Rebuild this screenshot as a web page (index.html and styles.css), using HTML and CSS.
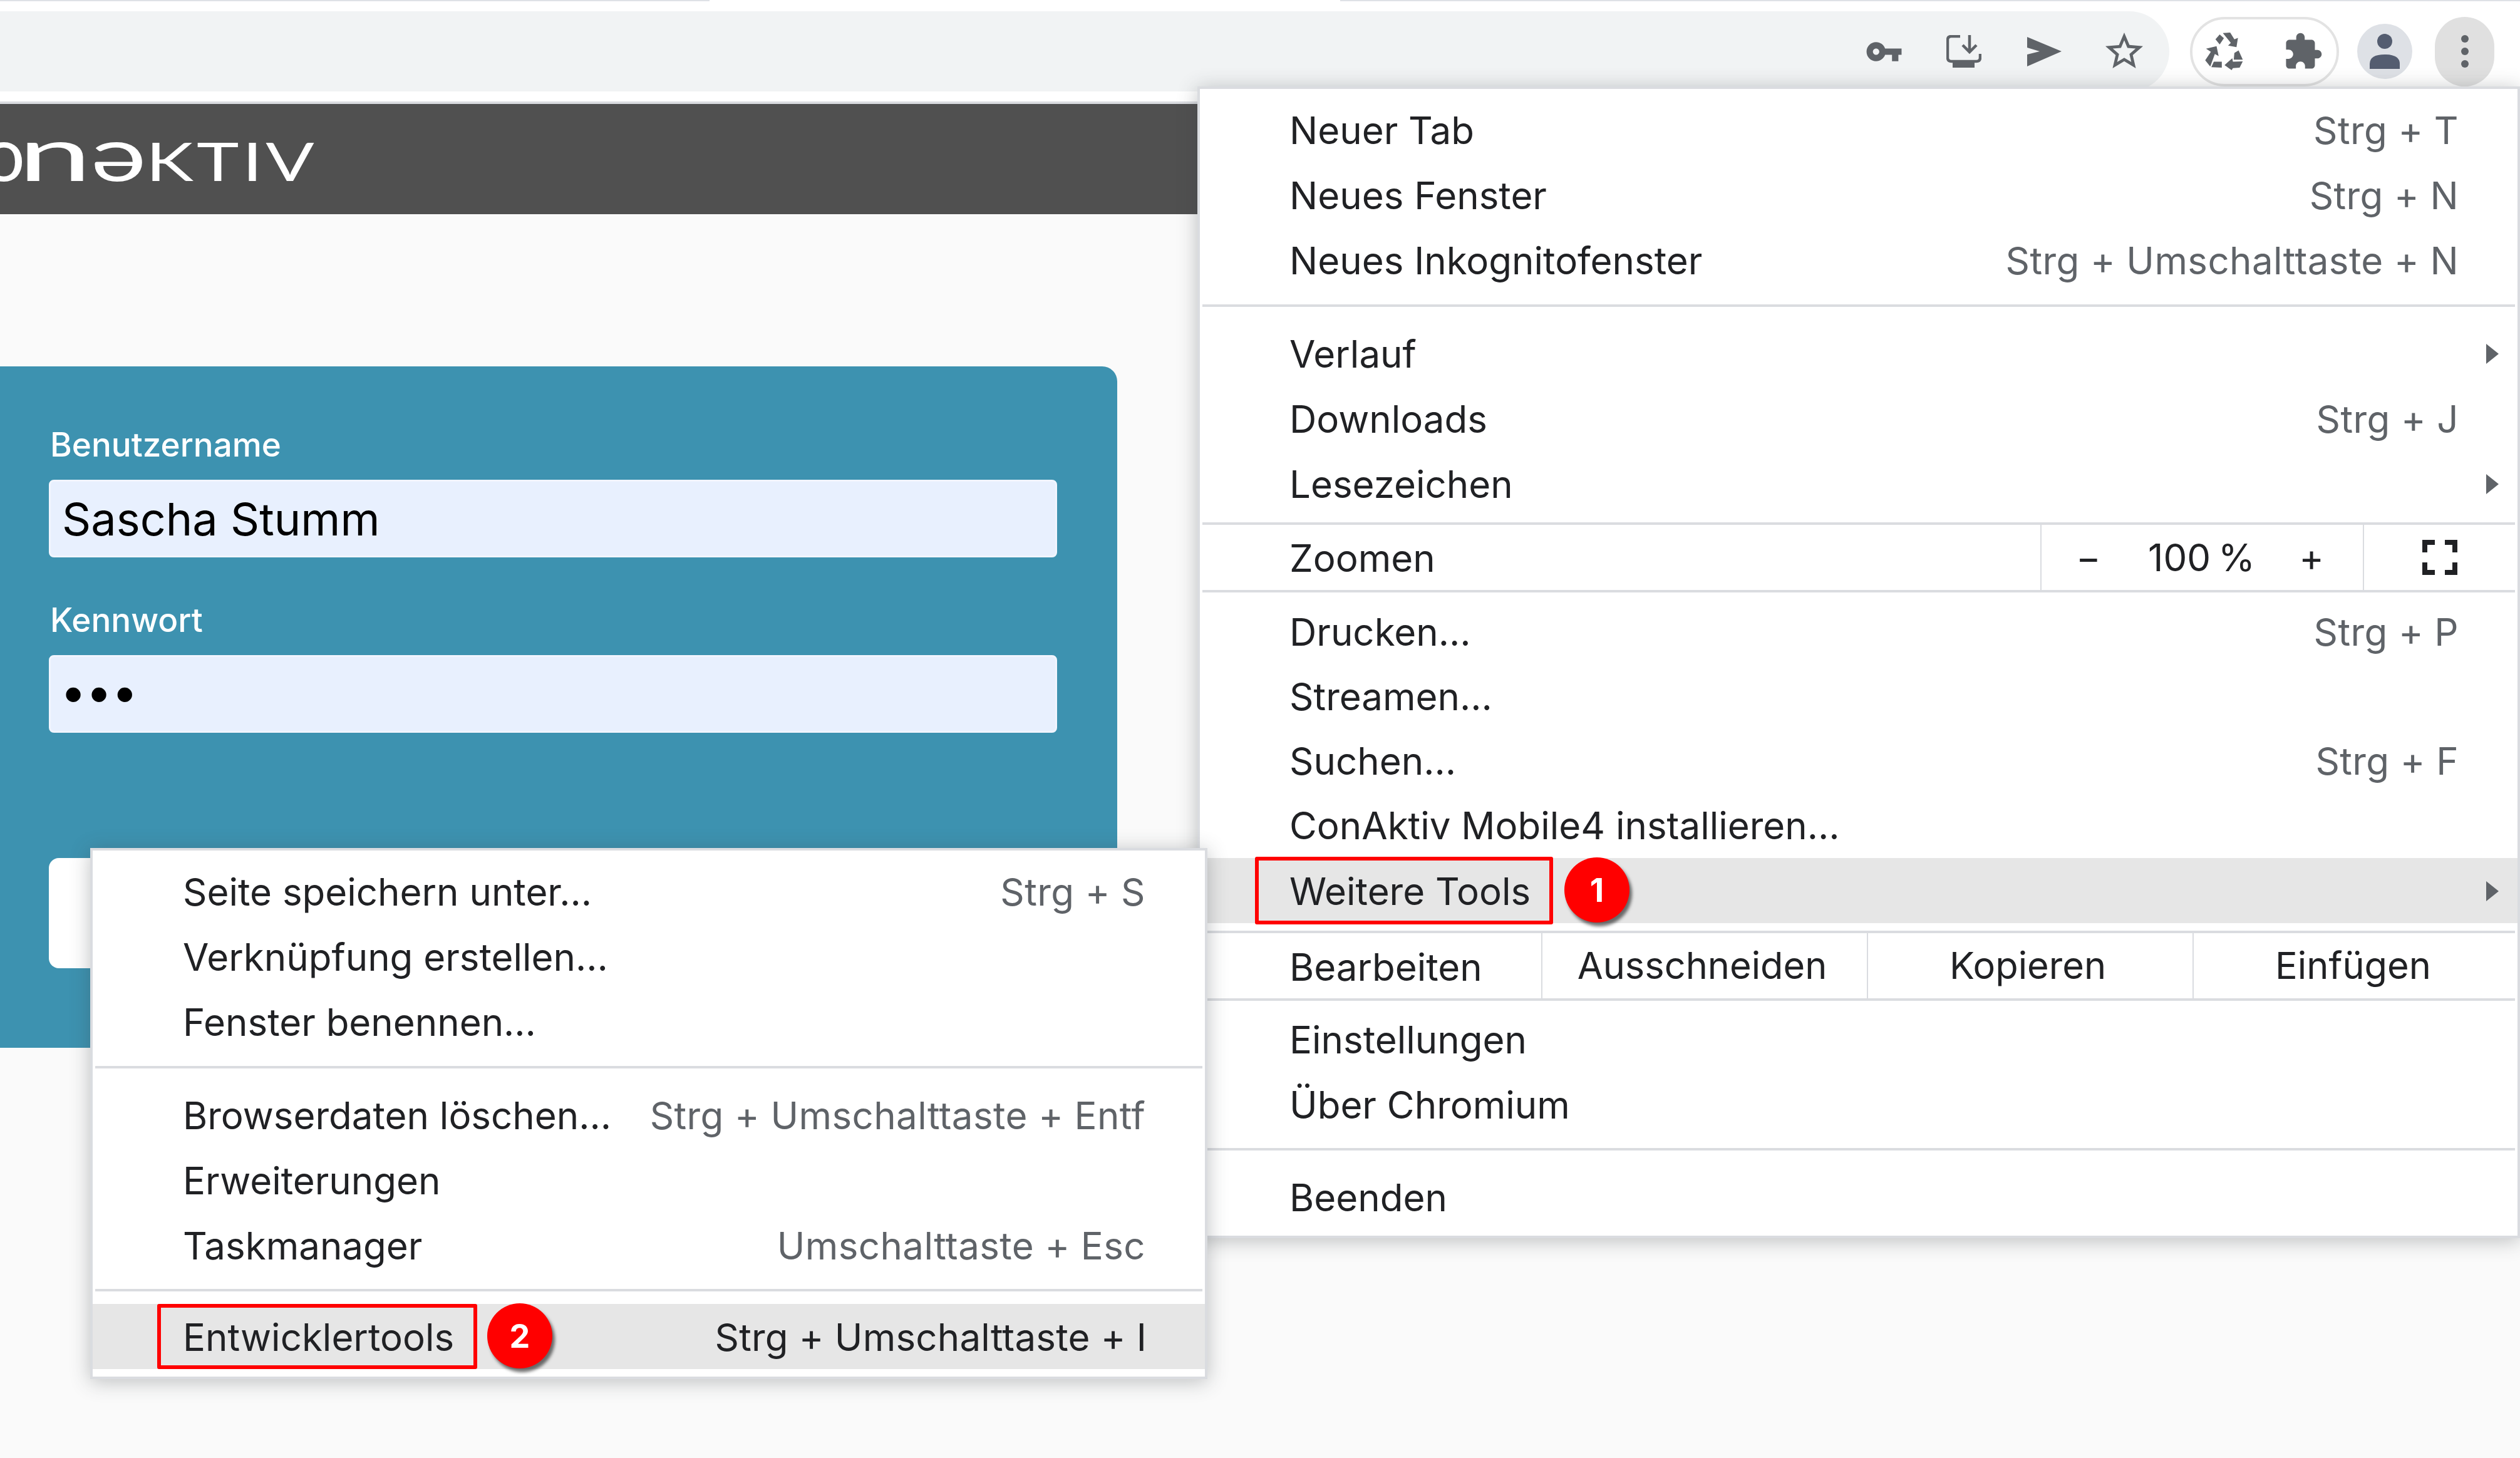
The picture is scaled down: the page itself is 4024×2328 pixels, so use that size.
FILE: index.html
```html
<!DOCTYPE html>
<html lang="de">
<head>
    <meta charset="UTF-8">
    <title>ConAktiv Mobile4</title>
    <link rel="stylesheet" href="styles.css">
</head>
<body>
    <div class="tabstrip">
        <span class="tab-line tab-line-left"></span>
        <span class="tab-active"></span>
        <span class="tab-line"></span>
    </div>

    <header class="toolbar">
        <div class="omnibox">
            <span class="omni-btn">
                <svg class="ico-key" viewBox="0 0 24 24"><path d="M12.65 10C11.83 7.67 9.61 6 7 6c-3.31 0-6 2.69-6 6s2.69 6 6 6c2.61 0 4.83-1.67 5.65-4H17v4h4v-4h2v-4H12.65zM7 14c-1.1 0-2-.9-2-2s.9-2 2-2 2 .9 2 2-.9 2-2 2z"/></svg>
            </span>
            <span class="omni-btn">
                <svg class="ico-install" viewBox="0 0 56 52">
                    <path class="line" d="M22 2H8Q2 2 2 8V36Q2 42 8 42H48Q54 42 54 36V30"/>
                    <path class="line" d="M37 0V27M26 16L37 27L48 16"/>
                    <rect x="10" y="41" width="35" height="11"/>
                </svg>
            </span>
            <span class="omni-btn">
                <svg class="ico-send" viewBox="0 0 55 47"><polygon points="0,0 55,23 0,47 0,28 20,23 0,17"/></svg>
            </span>
            <span class="omni-btn">
                <svg class="ico-star" viewBox="0 0 24 24"><path d="M22 9.24l-7.19-.62L12 2 9.19 8.63 2 9.24l5.46 4.73L5.82 21 12 17.27 18.18 21l-1.63-7.03L22 9.24zM12 15.4l-3.76 2.27 1-4.28-3.32-2.88 4.38-.38L12 6.1l1.71 4.04 4.38.38-3.32 2.88 1 4.28L12 15.4z"/></svg>
            </span>
        </div>
        <div class="ext-pill">
            <svg class="ico-recycle" viewBox="125 130 185 185">
                <polygon points="175,165 195,142 215,160 195,190"/>
                <polygon points="210,135 245,133 265,165 282,158 275,202 235,195 248,182"/>
                <polygon points="130,210 180,198 190,245 172,235 150,295 126,265 153,225"/>
                <polygon points="155,298 167,272 205,272 205,300"/>
                <polygon points="218,288 255,255 258,272 305,270 290,300 258,302 252,312"/>
                <polygon points="265,230 285,218 305,262 262,262"/>
            </svg>
            <svg class="ico-puzzle" viewBox="0 0 24 24"><path d="M20.5 11H19V7c0-1.1-.9-2-2-2h-4V3.5C13 2.12 11.88 1 10.5 1S8 2.12 8 3.5V5H4c-1.1 0-1.99.9-1.99 2v3.8H3.5c1.49 0 2.7 1.21 2.7 2.7s-1.21 2.7-2.7 2.7H2V20c0 1.1.9 2 2 2h3.8v-1.5c0-1.49 1.21-2.7 2.7-2.7 1.49 0 2.7 1.21 2.7 2.7V22H17c1.1 0 2-.9 2-2v-4h1.5c1.38 0 2.5-1.12 2.5-2.5S21.88 11 20.5 11z"/></svg>
        </div>
        <div class="avatar">
            <svg class="ico-user" viewBox="0 0 48 56"><circle cx="24" cy="12" r="12"/><path d="M0 56V48Q0 33 24 33T48 48V56Z"/></svg>
        </div>
        <div class="menu-btn"><i></i><i></i><i></i></div>
    </header>

    <div class="site-header">
        <div class="logo"><span class="logo-low logo-o">o</span><span class="logo-low logo-n">n</span><span class="logo-low logo-a">ə</span><span class="logo-caps">KTIV</span></div>
    </div>

    <main class="page-body">
        <form class="login-card">
            <label class="field-label">Benutzername</label>
            <div class="field field-user">Sascha Stumm</div>
            <label class="field-label">Kennwort</label>
            <div class="field field-pass">•••</div>
            <div class="login-btn"></div>
        </form>
    </main>

    <!-- Hauptmenue -->
    <nav class="menu menu-main">
        <div class="row"><span>Neuer Tab</span><span class="key">Strg + T</span></div>
        <div class="row"><span>Neues Fenster</span><span class="key">Strg + N</span></div>
        <div class="row"><span>Neues Inkognitofenster</span><span class="key">Strg + Umschalttaste + N</span></div>
        <div class="sep"></div>
        <div class="row"><span>Verlauf</span><span class="arrow"></span></div>
        <div class="row"><span>Downloads</span><span class="key">Strg + J</span></div>
        <div class="row"><span>Lesezeichen</span><span class="arrow"></span></div>
        <div class="sep sep-tight"></div>
        <div class="row-cells">
            <span class="cells-label">Zoomen</span>
            <div class="zoom-cell"><span>−</span><span class="zoom-value">100 %</span><span>+</span></div>
            <div class="fullscreen-cell">
                <svg class="ico-full" viewBox="0 0 56 56"><path d="M0 0H20V8H8V20H0ZM36 0H56V20H48V8H36ZM0 36H8V48H20V56H0ZM48 36H56V56H36V48H48Z"/></svg>
            </div>
        </div>
        <div class="sep sep-flush sep-print"></div>
        <div class="row row-compact"><span>Drucken…</span><span class="key">Strg + P</span></div>
        <div class="row row-compact"><span>Streamen…</span></div>
        <div class="row row-compact"><span>Suchen…</span><span class="key">Strg + F</span></div>
        <div class="row row-compact"><span>ConAktiv Mobile4 installieren…</span></div>
        <div class="row row-hover"><span>Weitere Tools</span><span class="arrow"></span></div>
        <div class="sep sep-edit"></div>
        <div class="row-cells">
            <span class="cells-label cells-label-edit">Bearbeiten</span>
            <span class="edit-cell">Ausschneiden</span>
            <span class="edit-cell">Kopieren</span>
            <span class="edit-cell edit-cell-last">Einfügen</span>
        </div>
        <div class="sep sep-flush"></div>
        <div class="row"><span>Einstellungen</span></div>
        <div class="row"><span>Über Chromium</span></div>
        <div class="sep sep-end"></div>
        <div class="row"><span>Beenden</span></div>
    </nav>

    <!-- Untermenue Weitere Tools -->
    <nav class="menu menu-sub">
        <div class="row"><span>Seite speichern unter…</span><span class="key">Strg + S</span></div>
        <div class="row"><span>Verknüpfung erstellen…</span></div>
        <div class="row"><span>Fenster benennen…</span></div>
        <div class="sep"></div>
        <div class="row"><span>Browserdaten löschen…</span><span class="key">Strg + Umschalttaste + Entf</span></div>
        <div class="row"><span>Erweiterungen</span></div>
        <div class="row"><span>Taskmanager</span><span class="key">Umschalttaste + Esc</span></div>
        <div class="sep sep-last"></div>
        <div class="row row-hover"><span>Entwicklertools</span><span class="key key-dark">Strg + Umschalttaste + I</span></div>
    </nav>

    <!-- Markierungen -->
    <div class="mark mark-1"></div>
    <div class="badge badge-1">1</div>
    <div class="mark mark-2"></div>
    <div class="badge badge-2">2</div>
</body>
</html>
```

FILE: styles.css
```css
* {
    box-sizing: border-box;
}
html, body {
    height: 100%;
}
body {
    margin: 0;
    width: 4024px;
    height: 2328px;
    position: relative;
    overflow: hidden;
    background: #fafafa;
    font-family: Inter, "Noto Sans", sans-serif;
    color: #202124;
}

/* Browser oben */
.tabstrip {
    display: flex;
    height: 2px;
    background: #fff;
}
.tab-line {
    flex: 1;
    background: #dee1e6;
}
.tab-line-left {
    flex: none;
    width: 1133px;
}
.tab-active {
    width: 1007px;
}
.toolbar {
    display: flex;
    align-items: center;
    height: 160px;
    background: #fff;
}
.omnibox {
    display: flex;
    justify-content: flex-end;
    width: 3464px;
    height: 128px;
    padding-right: 8px;
    background: #f1f3f4;
    border-radius: 0 64px 64px 0;
}
.omni-btn {
    display: flex;
    align-items: center;
    justify-content: center;
    width: 128px;
    height: 128px;
}
.omni-btn svg, .ext-pill svg {
    fill: #5f6368;
}
.ico-key {
    width: 61px;
    height: 61px;
}
.ico-install {
    width: 56px;
    height: 52px;
}
.ico-install .line {
    fill: none;
    stroke: #5f6368;
    stroke-width: 4.5;
}
.ico-send {
    width: 55px;
    height: 47px;
}
.ico-star {
    width: 72px;
    height: 72px;
}
.ext-pill {
    display: flex;
    align-items: center;
    gap: 62px;
    width: 238px;
    height: 111px;
    margin-left: 33px;
    padding-left: 20px;
    background: #fff;
    border: 4px solid #e3e3e3;
    border-radius: 56px;
}
.ico-recycle {
    width: 62px;
    height: 62px;
}
.ico-puzzle {
    width: 65px;
    height: 65px;
}
.avatar {
    display: flex;
    align-items: center;
    justify-content: center;
    width: 88px;
    height: 88px;
    margin-left: 29px;
    background: #dee1e6;
    border-radius: 50%;
}
.ico-user {
    width: 48px;
    height: 56px;
    fill: #545d70;
}
.menu-btn {
    display: flex;
    flex-direction: column;
    align-items: center;
    justify-content: center;
    gap: 8px;
    width: 95px;
    height: 111px;
    margin-left: 36px;
    background: #e0e0e0;
    border-radius: 48px;
}
.menu-btn i {
    width: 12px;
    height: 12px;
    background: #5f6368;
    border-radius: 50%;
}

/* Seite */
.site-header {
    height: 180px;
    overflow: hidden;
    background: #505050;
    border-top: 4px solid #dadce0;
    color: #fff;
}
.logo {
    display: flex;
    align-items: baseline;
    height: 176px;
    padding-top: 17px;
    margin-left: -28px;
    font-family: Lato, sans-serif;
    font-weight: 400;
    line-height: 120px;
}
.logo-low {
    display: inline-block;
    font-size: 120px;
    transform-origin: left bottom;
}
.logo-o {
    width: 57px;
}
.logo-n {
    width: 116px;
    transform: scaleX(1.75);
}
.logo-a {
    width: 88px;
    transform: scaleX(1.4);
}
.logo-caps {
    display: inline-block;
    font-size: 86px;
    letter-spacing: 4px;
    transform: scaleX(1.33);
    transform-origin: left bottom;
}
.page-body {
    padding-top: 243px;
}
.login-card {
    width: 1784px;
    height: 1088px;
    padding: 90px 96px 0 78px;
    background: #3d92b0;
    border-radius: 0 24px 24px 0;
}
.field-label {
    display: block;
    margin-bottom: 21px;
    padding-left: 2px;
    font-size: 53px;
    font-weight: 500;
    line-height: 70px;
    color: #fff;
}
.field {
    display: flex;
    align-items: center;
    height: 124px;
    margin-bottom: 65px;
    padding-left: 18px;
    background: #e8f0fe;
    border: 3px solid #f1f5fe;
    border-radius: 8px;
    font-size: 72px;
    color: #000;
}
.field-pass {
    margin-bottom: 200px;
    padding-left: 21px;
    font-family: "Liberation Sans", sans-serif;
    font-size: 86px;
    letter-spacing: 11px;
}
.login-btn {
    height: 176px;
    background: #fff;
    border-radius: 16px;
}

/* Menues */
.menu {
    position: absolute;
    background: #fff;
    border: 4px solid #dadce0;
    box-shadow: 0 4px 30px rgba(60, 64, 67, 0.32);
    font-size: 60px;
}
.menu-main {
    left: 1912px;
    top: 138px;
    width: 2112px;
    padding: 14px 0 9px;
}
.menu-sub {
    left: 144px;
    top: 1354px;
    width: 1784px;
    padding: 14px 0 12px;
}
.row {
    display: flex;
    align-items: center;
    justify-content: space-between;
    height: 104px;
    padding: 0 94px 0 143px;
}
.row-compact {
    height: 103.25px;
}
.menu-sub .row {
    padding-left: 144px;
    padding-right: 95px;
}
.row-hover {
    padding-top: 2px;
    background: #e6e6e6;
}
.key {
    color: #5f6368;
    letter-spacing: 0.4px;
}
.key-dark {
    margin-right: -2px;
    color: #202124;
    letter-spacing: 0.2px;
}
.arrow {
    width: 0;
    height: 0;
    margin-right: -64px;
    border-left: 20px solid #5f6368;
    border-top: 16px solid transparent;
    border-bottom: 16px solid transparent;
}
.sep {
    height: 4px;
    margin: 18px 4px 23px;
    background: #dadce0;
}
.sep-tight {
    margin: 9px 4px 0;
}
.sep-flush {
    margin: 0 4px 10px;
}
.sep-print {
    margin-bottom: 11px;
}
.sep-edit {
    margin: 12px 4px 0;
}
.sep-end {
    margin: 17px 4px 23px;
}
.sep-last {
    margin: 17px 4px 20px;
}
.row-cells {
    display: flex;
    height: 104px;
    align-items: stretch;
}
.cells-label {
    display: flex;
    align-items: center;
    width: 1342px;
    padding: 2px 0 0 143px;
}
.cells-label-edit {
    width: 545px;
    padding-top: 3px;
}
.zoom-cell {
    display: flex;
    align-items: center;
    justify-content: space-between;
    width: 517px;
    padding: 0 62px 0 55px;
    border-left: 2px solid #dadce0;
    border-right: 2px solid #dadce0;
}
.zoom-value {
    margin-left: 5px;
    word-spacing: -5px;
}
.fullscreen-cell {
    flex: 1;
    display: flex;
    align-items: center;
    padding-left: 93px;
}
.ico-full {
    width: 56px;
    height: 56px;
    fill: #202124;
}
.edit-cell {
    display: flex;
    align-items: center;
    justify-content: center;
    width: 520px;
    padding: 0 8px 3px 0;
    border-left: 2px solid #dadce0;
    font-size: 59.5px;
}
.edit-cell-last {
    flex: 1;
}

/* Rote Markierungen */
.mark {
    position: absolute;
    border: 6px solid #f00;
    border-radius: 3px;
}
.mark-1 {
    left: 2004px;
    top: 1368px;
    width: 476px;
    height: 108px;
}
.mark-2 {
    left: 251px;
    top: 2082px;
    width: 511px;
    height: 104px;
}
.badge {
    position: absolute;
    display: flex;
    align-items: center;
    justify-content: center;
    width: 104px;
    height: 104px;
    background: #f00;
    border-radius: 50%;
    box-shadow: 4px 6px 5px rgba(0, 0, 0, 0.55);
    font-size: 52px;
    font-weight: 700;
    color: #fff;
}
.badge-1 {
    left: 2498px;
    top: 1369px;
}
.badge-2 {
    left: 778px;
    top: 2081px;
}
```
